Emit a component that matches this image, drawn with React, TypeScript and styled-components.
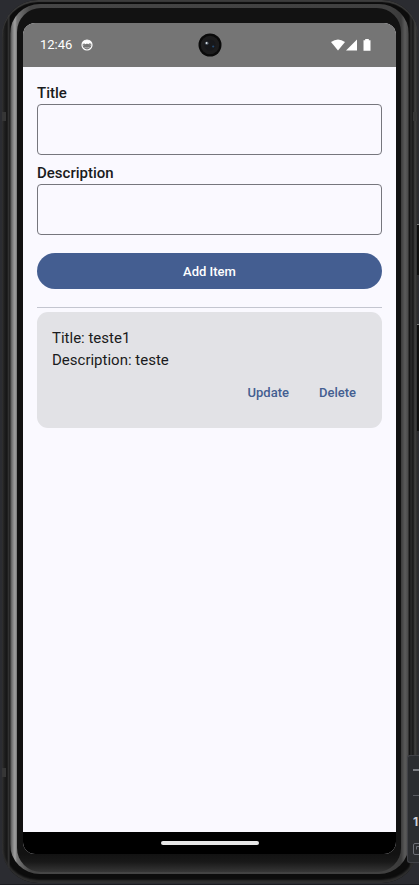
import React, { useState } from "react";
import styled, { createGlobalStyle } from "styled-components";

const GlobalStyle = createGlobalStyle`
  *, *::before, *::after { box-sizing: border-box; }
  body { margin: 0; background: #2b2c31; font-family: Roboto, sans-serif; }
`;

const Desk = styled.div`
  position: relative;
  display: flex;
  min-height: 100vh;
  padding: 0 1px 2px 2px;
  overflow: hidden;
  background: #2b2c31;
  box-shadow: inset 0 -1px 0 #1b1c20;
`;

const Frame = styled.div`
  display: flex;
  flex: 1;
  min-width: 0;
  padding: 4px 9px 9px 8px;
  border-radius: 36px;
  background: linear-gradient(90deg, #303030 0, #1b1b1b 3px, #161616 5px, #3a3a3a 7px, #0c0c0c 8px,
    #0c0c0c calc(100% - 9px), #2c2c2c calc(100% - 7px), #171717 calc(100% - 5px), #414141 calc(100% - 3px), #252525 100%);
  box-shadow: inset 0 2px 1px #3c3c3c, inset 0 -3px 2px #303030;
`;

const Rim = styled.div`
  display: flex;
  flex: 1;
  min-width: 0;
  padding: 4px 8px 2px 7px;
  border-radius: 30px;
  background: linear-gradient(90deg, #242424 0, #5c5c5c 1px, #858585 3px, #a0a0a0 5px, #777777 7px,
    #464646 20px, #404040 calc(100% - 20px), #3b3b3b calc(100% - 8px), #5b5b5b calc(100% - 4px), #4a4a4a calc(100% - 1px), #1a1a1a 100%);
`;

const Bezel = styled.div`
  display: flex;
  flex: 1;
  min-width: 0;
  padding: 15px 5px 18px 6px;
  border-radius: 24px;
  background: linear-gradient(180deg, #121212 0, #121212 calc(100% - 18px), #191919 calc(100% - 10px), #363636 100%);
`;

const Screen = styled.div`
  display: flex;
  flex: 1;
  flex-direction: column;
  min-width: 0;
  overflow: hidden;
  border-radius: 12px;
  background: #faf9ff;
`;

const StatusBar = styled.header`
  display: grid;
  grid-template-columns: 1fr auto 1fr;
  align-items: center;
  height: 44px;
  padding: 0 17px;
  background: #757575;
  color: #ffffff;
`;

const StatusStart = styled.div`
  display: flex;
  align-items: center;
  gap: 9px;
  font-size: 13px;
  line-height: 16px;
`;

const StatusEnd = styled.div`
  display: flex;
  align-items: center;
  justify-content: flex-end;
  padding-right: 7px;
`;

const Icon = styled.svg`
  display: block;
  flex: none;
`;

const Content = styled.main`
  display: flex;
  flex: 1;
  flex-direction: column;
  padding: 18px 14px 0;
  color: #1a1b20;
`;

const Field = styled.div`
  display: flex;
  flex-direction: column;
  margin-bottom: 10px;
`;

const Label = styled.label`
  font-size: 15px;
  font-weight: 500;
  line-height: 16px;
  margin-bottom: 3px;
`;

const TextBox = styled.input`
  width: 100%;
  height: 51px;
  padding: 0 14px;
  border: 1px solid #76767d;
  border-radius: 4px;
  background: transparent;
  color: inherit;
  font: 400 15px Roboto, sans-serif;
`;

const AddButton = styled.button`
  height: 36px;
  margin-top: 8px;
  padding: 0 20px;
  border: 0;
  border-radius: 18px;
  background: #445e91;
  color: #ffffff;
  font: 500 13px Roboto, sans-serif;
`;

const Divider = styled.hr`
  width: 100%;
  height: 1px;
  margin: 18px 0 4px;
  border: 0;
  background: #c4c6d0;
`;

const Card = styled.article`
  padding: 15px 11px 18px 15px;
  border-radius: 11px;
  background: #e2e2e6;
`;

const CardLine = styled.p`
  margin: 0;
  font-size: 15px;
  line-height: 22px;
`;

const CardActions = styled.div`
  display: flex;
  justify-content: flex-end;
  margin-top: 3px;
`;

const TextButton = styled.button`
  height: 36px;
  padding: 0 15px;
  border: 0;
  border-radius: 18px;
  background: transparent;
  color: #445e91;
  font: 500 13px Roboto, sans-serif;
`;

const NavBar = styled.footer`
  display: flex;
  align-items: center;
  justify-content: center;
  height: 22px;
  background: #000000;
`;

const HomeHandle = styled.div`
  width: 98px;
  height: 4px;
  border-radius: 2px;
  background: #e8e8e8;
`;

const SideKey = styled.div<{ $top: number; $height: number }>`
  position: absolute;
  top: ${(p) => p.$top}px;
  right: 0;
  width: 2px;
  height: ${(p) => p.$height}px;
  border-top: 1px solid #777777;
  background: #0d0d0d;
`;

const Antenna = styled.div<{ $top: number; $side: "left" | "right" }>`
  position: absolute;
  top: ${(p) => p.$top}px;
  ${(p) => p.$side}: 2px;
  width: 4px;
  height: 9px;
  background: #363636;
`;

const ZoomPanel = styled.aside`
  position: absolute;
  right: 0;
  bottom: 22px;
  display: flex;
  flex-direction: column;
  align-items: flex-end;
  width: 12px;
  height: 108px;
  overflow: hidden;
  border: 1px solid #414247;
  border-right: 0;
  border-radius: 3px 0 0 3px;
  background: #2b2d30;
`;

const PanelButton = styled.button<{ $height: number }>`
  display: flex;
  align-items: center;
  width: 6px;
  height: ${(p) => p.$height}px;
  padding: 0;
  border: 0;
  background: transparent;
  color: #ced0d6;
  font: 700 12px Inter, sans-serif;
`;

const PanelRule = styled.div`
  width: 6px;
  height: 1px;
  margin: 11px 0 3px;
  background: #5a5c62;
`;

function ClockApp() {
  return (
    <Icon width="12" height="12" viewBox="0 0 12 12" aria-hidden="true">
      <circle cx="6" cy="6" r="5" fill="none" stroke="#fff" strokeWidth="1.2" />
      <path d="M1.8 4Q2.6 1 6 1T10.2 4L9.4 4.8 8.4 4.2 7.2 5.2 6 4.6 4.6 5.2 3.6 4.4 2.6 5Z" fill="#fff" />
      <path d="M2 6.4 3.3 5.8M10 6.4 8.7 5.8M3.5 8.4Q6 9.4 8.5 8.4" fill="none" stroke="#c5c5c5" strokeWidth=".7" />
    </Icon>
  );
}

function Signals() {
  return (
    <Icon width="41" height="12" viewBox="0 0 41 12" aria-label="Wi-Fi, mobile signal and battery">
      <path d="M0 3.1Q7-2.2 14 3.1L7 11.5Z" fill="#fff" />
      <path d="M15 11.5H26V.5Z" fill="#fff" />
      <path d="M32.5 1.2H34.2V0H37.8V1.2H39.5V11.7H32.5Z" fill="#fff" />
    </Icon>
  );
}

function Camera() {
  return (
    <Icon width="24" height="24" viewBox="0 0 24 24" aria-hidden="true">
      <circle cx="12" cy="12" r="11.5" fill="#0a0a0a" />
      <circle cx="12" cy="12" r="9.3" fill="#1c1c1d" />
      <circle cx="12" cy="12" r="5.5" fill="#17181b" />
      <circle cx="8.8" cy="10.3" r="1.8" fill="#46505c" />
      <circle cx="8.6" cy="10" r=".9" fill="#dde2e4" />
      <circle cx="15.2" cy="13.5" r="1.1" fill="#24486f" />
    </Icon>
  );
}

export default function App() {
  const [title, setTitle] = useState("");
  const [description, setDescription] = useState("");

  return (
    <>
      <GlobalStyle />
      <Desk>
        <Frame>
          <Rim>
            <Bezel>
              <Screen>
                <StatusBar>
                  <StatusStart>
                    <span>12:46</span>
                    <ClockApp />
                  </StatusStart>
                  <Camera />
                  <StatusEnd>
                    <Signals />
                  </StatusEnd>
                </StatusBar>
                <Content>
                  <Field>
                    <Label htmlFor="title">Title</Label>
                    <TextBox id="title" value={title} onChange={(e) => setTitle(e.target.value)} />
                  </Field>
                  <Field>
                    <Label htmlFor="description">Description</Label>
                    <TextBox id="description" value={description} onChange={(e) => setDescription(e.target.value)} />
                  </Field>
                  <AddButton type="button">Add Item</AddButton>
                  <Divider />
                  <Card>
                    <CardLine>Title: teste1</CardLine>
                    <CardLine>Description: teste</CardLine>
                    <CardActions>
                      <TextButton type="button">Update</TextButton>
                      <TextButton type="button">Delete</TextButton>
                    </CardActions>
                  </Card>
                </Content>
                <NavBar>
                  <HomeHandle />
                </NavBar>
              </Screen>
            </Bezel>
          </Rim>
        </Frame>
        <Antenna $side="left" $top={112} />
        <Antenna $side="right" $top={112} />
        <Antenna $side="left" $top={768} />
        <SideKey $top={224} $height={51} />
        <SideKey $top={324} $height={107} />
        <ZoomPanel>
          <PanelButton type="button" $height={28} aria-label="Zoom out">
            <Icon width="6" height="2" viewBox="0 0 6 2">
              <path d="M0 1H6" stroke="#ced0d6" strokeWidth="1.2" />
            </Icon>
          </PanelButton>
          <PanelRule />
          <PanelButton type="button" $height={44}>1</PanelButton>
          <PanelButton type="button" $height={12} aria-label="Fit to screen">
            <Icon width="6" height="12" viewBox="0 0 6 12">
              <path d="M6 .5H2Q.5.5.5 2V10Q.5 11.5 2 11.5H6M6 3.5H3.5V6.5" fill="none" stroke="#6f7178" />
            </Icon>
          </PanelButton>
        </ZoomPanel>
      </Desk>
    </>
  );
}
